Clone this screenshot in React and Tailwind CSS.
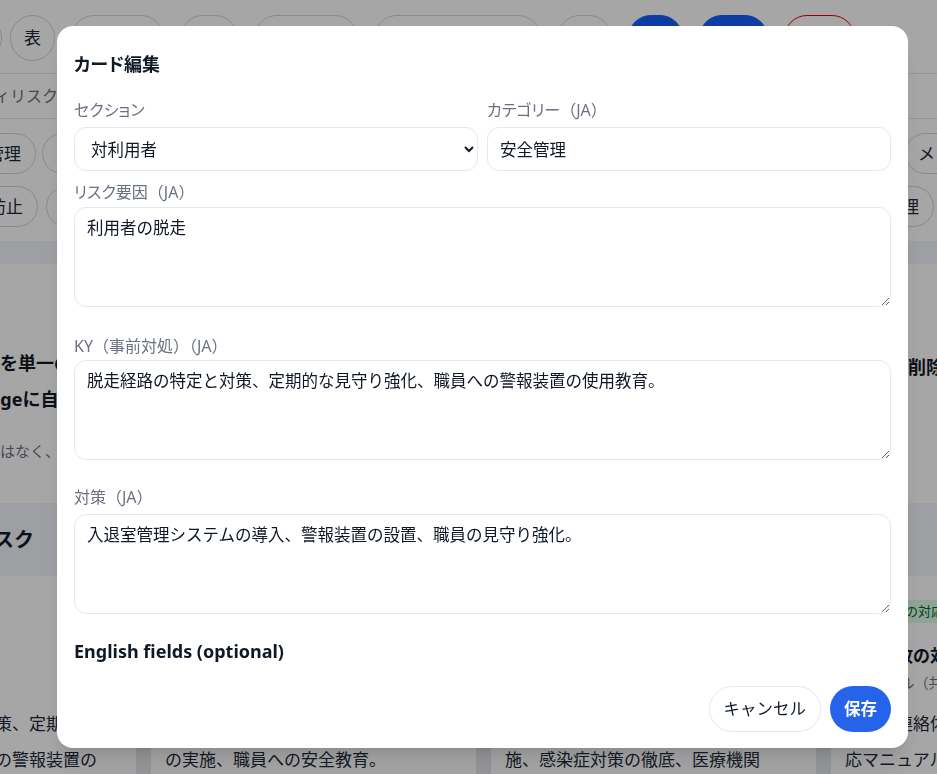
import { useState } from "react"

const pills = [
  { label: "一覧", w: "w-[93px]", tone: "plain" },
  { label: "印刷", w: "w-[58px]", tone: "plain" },
  { label: "PDF出力", w: "w-[104px]", tone: "plain" },
  { label: "テンプレート読込", w: "w-[167px]", tone: "plain" },
  { label: "全選択", w: "w-[55px]", tone: "plain" },
  { label: "追加", w: "w-[55px]", tone: "blue" },
  { label: "保存", w: "w-[69px]", tone: "blue" },
  { label: "削除", w: "w-[71px]", tone: "red" },
]

const pillTone = {
  plain: "border-gray-300 text-gray-800 bg-white",
  blue: "border-blue-600 bg-blue-600 text-white",
  red: "border-red-600 text-red-600 bg-white",
}

const cards = [
  {
    tag: "対利用者",
    title: "脱走",
    meta: "安全管理",
    lines: ["脱走経路特定と夜間対策、定期的な見", "守り強化と夜勤職員への警報装置の", "使用教育。"],
  },
  {
    tag: "対利用者",
    title: "転倒",
    meta: "安全管理",
    lines: ["転倒リスク評価と環境整備、定期研修", "の実施、職員への安全教育。"],
  },
  {
    tag: "対利用者",
    title: "感染症",
    meta: "衛生管理",
    lines: ["手指衛生と環境消毒の定期的な点検実", "施、感染症対策の徹底、医療機関", "との連携。"],
  },
  {
    tag: "利用者間の対応",
    title: "転倒事故の対応",
    meta: "マニュアル（共有）",
    lines: ["緊急時連絡体制の整備と、転倒時の対", "応マニュアルの作成。"],
  },
]

const Chip = ({ children, className = "" }) => (
  <span
    className={`flex h-[41px] shrink-0 items-center justify-center whitespace-nowrap rounded-full border border-gray-300 bg-white text-[17px] text-gray-800 ${className}`}
  >
    {children}
  </span>
)

// the risk card list that sits behind the dialog
const BoardPage = () => (
  <div className="h-screen overflow-hidden bg-white">
    <header className="flex items-center gap-4 border-b border-gray-200 pb-[12px] pt-[15px]">
      <div className="flex shrink-0 gap-2">
        <span className="-ml-[60px] flex h-[46px] w-[62px] items-center justify-center rounded-full border border-gray-300 text-[17px]">
          カード
        </span>
        <span className="flex h-[46px] w-[45px] items-center justify-center rounded-full border border-gray-300 text-[17px] text-gray-800">
          表
        </span>
      </div>
      {pills.map((pill) => (
        <span
          key={pill.label}
          className={`flex h-[46px] shrink-0 items-center justify-center overflow-hidden whitespace-nowrap rounded-full border text-[17px] ${pill.w} ${pillTone[pill.tone]}`}
        >
          {pill.label}
        </span>
      ))}
    </header>

    <div className="flex h-[45px] items-center border-b border-gray-200">
      <p className="-ml-[68px] whitespace-nowrap text-[16px] text-gray-500">
        セーフティリスクアセスメント
      </p>
    </div>

    <div className="flex h-[122px] flex-col gap-3 pt-[14px]">
      <div className="flex justify-between">
        <div className="-ml-[62px] flex gap-[6px]">
          <Chip className="w-[98px]">安全管理</Chip>
          <Chip className="w-[120px]">緊急時対応</Chip>
        </div>
        <Chip className="-mr-[88px] w-[120px] justify-start pl-[12px]">メンタルヘルス</Chip>
      </div>
      <div className="flex justify-between">
        <div className="-ml-[60px] flex gap-2">
          <Chip className="w-[98px]">転倒防止</Chip>
          <Chip className="w-[110px]">感染対策</Chip>
        </div>
        <Chip className="mr-[3px] w-[98px]">感染管理</Chip>
      </div>
    </div>

    <div className="h-[23px] bg-slate-100" />

    <section className="flex h-[239px] justify-between pt-[81px]">
      <div className="-ml-[90px] whitespace-nowrap">
        <p className="-ml-[18px] text-[18px] font-bold leading-9 text-gray-900">
          複数のカードを単一のページにまとめて印刷できます。
        </p>
        <p className="text-[18px] font-bold leading-9 text-gray-900">
          用紙 A4 pageに自動でフィットします。
        </p>
        <p className="mt-[22px] text-[15px] leading-6 text-gray-500">
          既定の印刷ではなく、専用レイアウトを使います。
        </p>
      </div>
      <p className="-mr-[51px] mt-1 w-[80px] shrink-0 whitespace-nowrap text-[18px] font-bold leading-9 text-gray-900">
        削除ボタン
      </p>
    </section>

    <div className="flex h-[73px] items-center bg-slate-100">
      <h2 className="-ml-[26px] text-[20px] font-bold text-gray-900">リスク</h2>
    </div>

    <div className="-ml-[189px] grid w-max grid-cols-[repeat(4,325px)] gap-x-[15px] bg-gray-200">
      {cards.map((card) => (
        <article key={card.title} className="h-[260px] bg-white px-[14px] pt-[22px]">
          <span className="inline-block h-[23px] whitespace-nowrap rounded bg-green-100 px-2 text-[13px] leading-[23px] text-green-800">
            {card.tag}
          </span>
          <h3 className="mt-[19px] text-[17px] font-bold leading-7 text-gray-900">{card.title}</h3>
          <p className="mt-[3px] text-[14px] leading-5 text-gray-500">{card.meta}</p>
          <div className="mt-[13px] text-[17px] leading-9 text-gray-800">
            {card.lines.map((line) => (
              <p key={line} className="whitespace-nowrap">
                {line}
              </p>
            ))}
          </div>
        </article>
      ))}
    </div>
  </div>
)

// kana get proportional widths, the （JA） suffix keeps full-width brackets
const Label = ({ children, suffix, className = "" }) => (
  <label className={`block text-[16px] leading-6 text-gray-500 ${className}`}>
    <span className="[font-feature-settings:'palt']">{children}</span>
    {suffix && <span>{suffix}</span>}
  </label>
)

const fieldBox =
  "w-full rounded-xl border border-gray-200 bg-white px-3 text-[16.5px] text-gray-900 outline-none"

const EditCardDialog = () => {
  const [section, setSection] = useState("対利用者")

  return (
    <div className="fixed inset-0 flex items-start bg-black/35 pl-[57px] pt-[26px]">
      <div className="flex h-[calc(100vh-52px)] w-[851px] flex-col rounded-2xl bg-white shadow-xl">
        <div className="min-h-0 flex-1 overflow-hidden px-[17px] pt-6">
          <h2 className="text-[18px] font-bold leading-7 text-gray-900 [font-feature-settings:'palt']">
            カード編集
          </h2>

          <div className="mt-5 grid grid-cols-2 gap-x-[9px]">
            <div>
              <Label className="mb-[5px]">セクション</Label>
              <select
                value={section}
                onChange={(e) => setSection(e.target.value)}
                className={`h-11 ${fieldBox}`}
              >
                <option>対利用者</option>
                <option>対職員</option>
                <option>対家族</option>
                <option>施設運営</option>
              </select>
            </div>
            <div>
              <Label className="mb-[5px]" suffix="（JA）">
                カテゴリー
              </Label>
              <input defaultValue="安全管理" className={`h-11 ${fieldBox}`} />
            </div>
          </div>

          <Label className="mb-[3px] mt-[9px]" suffix="（JA）">
            リスク要因
          </Label>
          <textarea defaultValue="利用者の脱走" className={`block h-[100px] py-2 leading-6 ${fieldBox}`} />

          <Label className="mb-[2px] mt-[27px]" suffix="KY（事前対処）（JA）" />
          <textarea
            defaultValue="脱走経路の特定と対策、定期的な見守り強化、職員への警報装置の使用教育。"
            className={`block h-[100px] py-2 leading-6 ${fieldBox}`}
          />

          <Label className="mb-[5px] mt-[25px]" suffix="対策（JA）" />
          <textarea
            defaultValue="入退室管理システムの導入、警報装置の設置、職員の見守り強化。"
            className={`block h-[100px] py-2 leading-6 ${fieldBox}`}
          />

          <h3 className="mt-[23px] text-[18px] font-bold leading-7 text-gray-900">
            English fields (optional)
          </h3>

          <div className="mt-4 grid grid-cols-2 gap-x-[9px]">
            <div>
              <Label className="mb-[5px]">Category (EN)</Label>
              <input placeholder="Safety management" className={`h-11 ${fieldBox}`} />
            </div>
            <div>
              <Label className="mb-[5px]">Risk factor (EN)</Label>
              <input placeholder="Resident wandering off" className={`h-11 ${fieldBox}`} />
            </div>
          </div>
        </div>

        <div className="flex justify-end gap-[9px] px-[17px] pb-4 pt-3">
          <button className="h-[46px] rounded-full border border-gray-200 bg-white px-[14px] text-[16.5px] text-gray-900">
            キャンセル
          </button>
          <button className="h-[46px] rounded-full bg-[#2563eb] px-[14px] text-[16.5px] font-bold text-white">
            保存
          </button>
        </div>
      </div>
    </div>
  )
}

const App = () => (
  <div className="font-['Noto_Sans','Noto_Sans_CJK_JP',sans-serif]">
    <BoardPage />
    <EditCardDialog />
  </div>
)

export default App
